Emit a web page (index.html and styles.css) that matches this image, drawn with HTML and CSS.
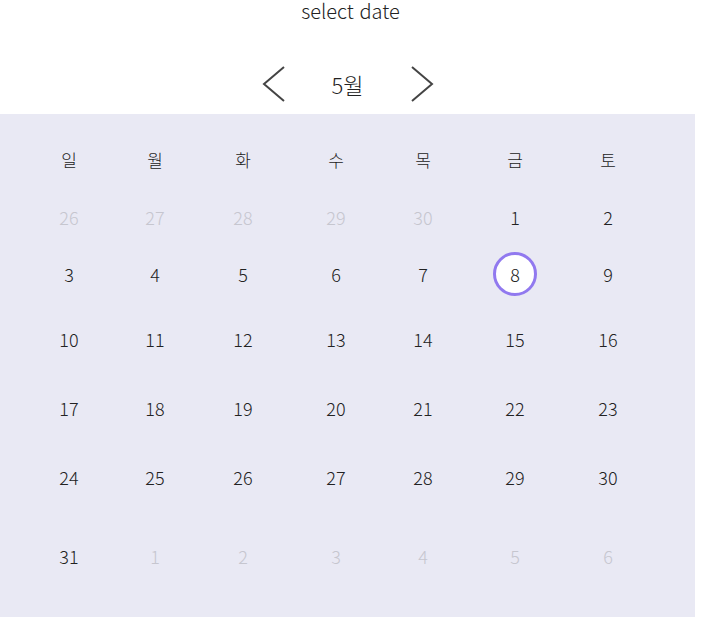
FILE: index.html
```html
<!DOCTYPE html>
<html lang="ko">
<head>
<meta charset="utf-8">
<link rel="stylesheet" href="styles.css">
</head>
<body>
<div class="page">
  <div class="title">select date</div>
  <div class="nav">
    <svg class="chev" width="24" height="36" viewBox="0 0 24 36"><polyline points="22,1 2,18 22,35" fill="none" stroke="#444" stroke-width="2"/></svg>
    <div class="month">5월</div>
    <svg class="chev" width="24" height="36" viewBox="0 0 24 36"><polyline points="2,1 22,18 2,35" fill="none" stroke="#444" stroke-width="2"/></svg>
  </div>
  <div class="panel">
    <div class="grid">
      <div class="cell head">일</div><div class="cell head">월</div><div class="cell head">화</div><div class="cell head">수</div><div class="cell head">목</div><div class="cell head">금</div><div class="cell head">토</div>
      <div class="cell dim">26</div><div class="cell dim">27</div><div class="cell dim">28</div><div class="cell dim">29</div><div class="cell dim">30</div><div class="cell">1</div><div class="cell">2</div>
      <div class="cell">3</div><div class="cell">4</div><div class="cell">5</div><div class="cell">6</div><div class="cell">7</div><div class="cell"><span class="sel">8</span></div><div class="cell">9</div>
      <div class="cell">10</div><div class="cell">11</div><div class="cell">12</div><div class="cell">13</div><div class="cell">14</div><div class="cell">15</div><div class="cell">16</div>
      <div class="cell">17</div><div class="cell">18</div><div class="cell">19</div><div class="cell">20</div><div class="cell">21</div><div class="cell">22</div><div class="cell">23</div>
      <div class="cell">24</div><div class="cell">25</div><div class="cell">26</div><div class="cell">27</div><div class="cell">28</div><div class="cell">29</div><div class="cell">30</div>
      <div class="cell">31</div><div class="cell dim">1</div><div class="cell dim">2</div><div class="cell dim">3</div><div class="cell dim">4</div><div class="cell dim">5</div><div class="cell dim">6</div>
    </div>
  </div>
</div>
</body>
</html>
```
FILE: styles.css
```css
html, body {
  margin: 0;
  padding: 0;
  background: #ffffff;
}
body {
  font-family: "Noto Sans CJK KR", "Noto Sans", sans-serif;
  color: #222222;
}
.page {
  width: 695px;
}
.title {
  height: 22px;
  line-height: 22px;
  font-size: 20px;
  font-weight: 300;
  text-align: center;
  padding-left: 6px;
}
.nav {
  margin-top: 40px;
  height: 44px;
  display: flex;
  align-items: center;
  justify-content: center;
  gap: 45px;
}
.chev {
  display: block;
}
.month {
  font-size: 22px;
  font-weight: 300;
  line-height: 28px;
  width: 34px;
  text-align: center;
}
.panel {
  margin-top: 8px;
  background: #e9e9f4;
  padding: 26px 0 29px 26px;
}
.grid {
  display: grid;
  grid-template-columns: 86px 86px 90px 96px 78px 106px 80px;
  grid-template-rows: 40px 74px 39px 92px 46px 92px 65px;
}
.cell {
  display: flex;
  align-items: center;
  justify-content: center;
  font-size: 18px;
  font-weight: 300;
  line-height: 20px;
}
.head {
  font-size: 17px;
}
.dim {
  color: #c6c6cf;
}
.sel {
  width: 44px;
  height: 44px;
  box-sizing: border-box;
  border: 3px solid #9179ef;
  border-radius: 50%;
  background: #ffffff;
  display: flex;
  align-items: center;
  justify-content: center;
}
```
